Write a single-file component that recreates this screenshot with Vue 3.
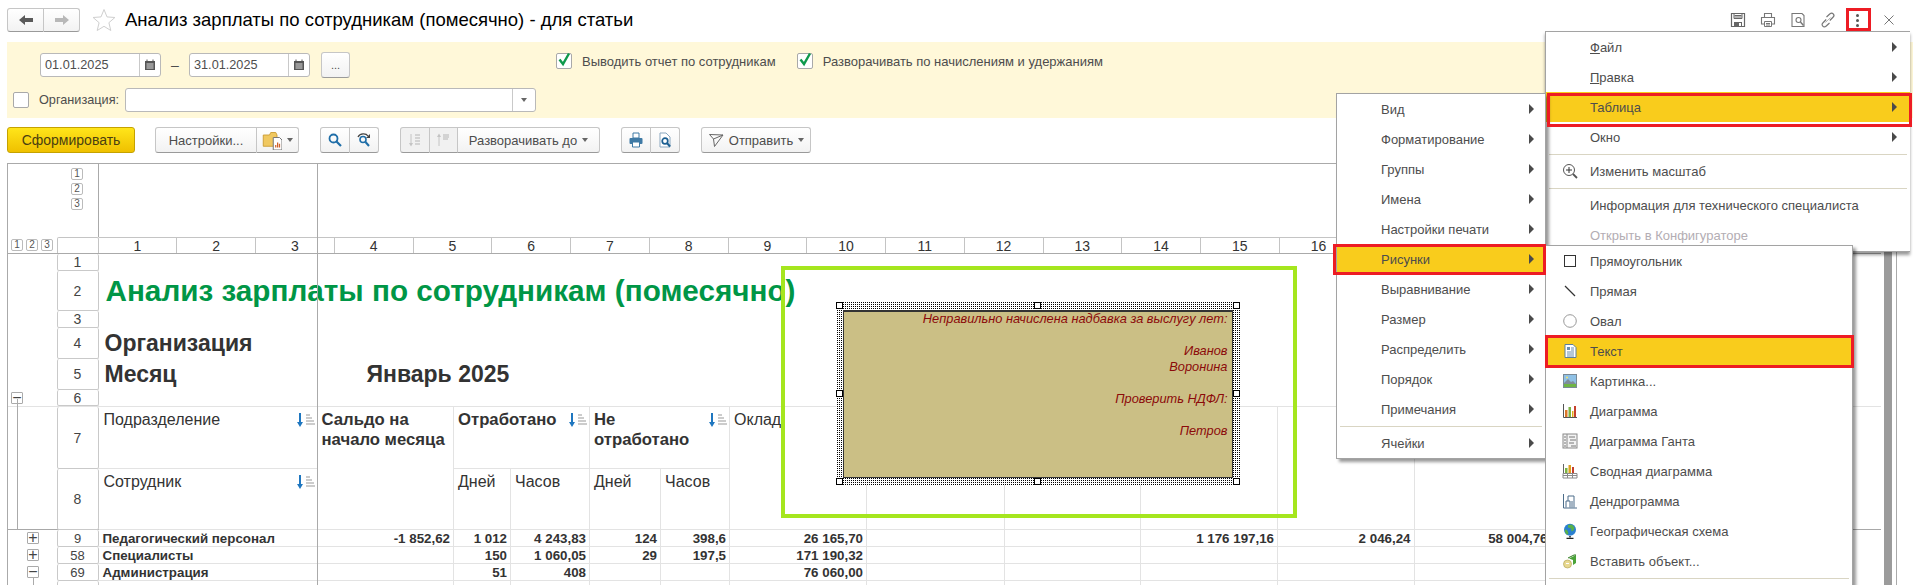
<script setup>
const icons = {
  back: '<path d="M1 8l6-5v3h8v4H7v3z" fill="#5a5a5a"/>',
  forward: '<path d="M15 8L9 3v3H1v4h8v3z" fill="#b8b8b8"/>',
  star: '<path d="M12 1.500l3 7.400 7.900.6-6 5.200 1.900 7.800L12 18.300l-6.800 4.200 1.900-7.800-6-5.200 7.900-.6z" fill="#fff" stroke="#cfcfcf" stroke-width="1"/>',
  calendar: '<rect x="3" y="4" width="10" height="9" fill="#555"/><path d="M5 2.500v2M11 2.500v2" stroke="#555"/><path d="M4.500 7h7M4.500 9h7M4.500 11h7" stroke="#ddd"/>',
  folder: '<path d="M1 4h5l1-2h4l1 2v9H1z" fill="#f0c860" stroke="#c99a30" stroke-width=".7"/><path d="M9 6h5l2 2v8H9z" fill="#fff" stroke="#777" stroke-width=".8"/><path d="M11 14v-2M12.500 14v-4M14 14v-3" stroke="#d0602a"/>',
  search: '<circle cx="6.500" cy="6.500" r="4" fill="none" stroke="#1f6ea8" stroke-width="1.800"/><path d="M9.500 9.500l4.500 4.500" stroke="#1f6ea8" stroke-width="2.200"/>',
  searchAgain: '<circle cx="7" cy="7.500" r="3" fill="none" stroke="#1f6ea8" stroke-width="1.600"/><path d="M9.500 10l3.500 4" stroke="#1f6ea8" stroke-width="2"/><path d="M2 5c2-4 8-4 10-1" fill="none" stroke="#444" stroke-width="1.300"/><path d="M14 2v4h-4z" fill="#444"/>',
  sortOff: '<path d="M4 2v11" stroke="#c4c4c4"/><path d="M2 11l2 3.500 2-3.500z" fill="#c4c4c4"/><path d="M8 3h5M8 6h5M8 9h5M8 12h5" stroke="#b5b5b5"/>',
  sortUpOff: '<path d="M4 3v11" stroke="#c4c4c4"/><path d="M2 5l2-3.500L6 5z" fill="#c4c4c4"/><path d="M8 3h6M8 5h6M8 7h5" stroke="#b5b5b5"/>',
  print: '<path d="M5 1h6v5H5z" fill="#fff" stroke="#3f7aa5"/><rect x="1.500" y="6" width="13" height="6" rx="1" fill="#3f7aa5"/><path d="M4.500 10h7v5h-7z" fill="#fff" stroke="#3f7aa5"/>',
  preview: '<path d="M3 1h6l4 4v10H3z" fill="#fff" stroke="#8aa7bf"/><circle cx="8" cy="9" r="2.800" fill="none" stroke="#1b5f92" stroke-width="1.700"/><path d="M10 11l3 3.500" stroke="#1b5f92" stroke-width="2"/>',
  send: '<path d="M1.500 2.500L15 3 6.500 14.500 5.500 7z" fill="none" stroke="#666"/><path d="M5.500 7L15 3" stroke="#666"/>',
  save: '<path d="M1.500 1.500h13v13h-13z" fill="none" stroke="#666" stroke-width="1.200"/><path d="M4 1.500h8v5H4zM4.500 3.500h7M4.500 5h7" fill="none" stroke="#666"/><rect x="4" y="10" width="8" height="4.500" fill="#666"/><rect x="9" y="11" width="2" height="3" fill="#fff"/>',
  printLine: '<path d="M4.500 5V1.500h7V5M4.500 12h-3V5.500h13V12h-3" fill="none" stroke="#777" stroke-width="1.100"/><path d="M4.500 9.500h7v5h-7zM6 11.500h4M6 13h4" fill="none" stroke="#777"/>',
  previewLine: '<path d="M2 1.500h10l2 2V14.500H2z" fill="none" stroke="#777" stroke-width="1.100"/><circle cx="8.500" cy="8" r="2.500" fill="none" stroke="#777" stroke-width="1.100"/><path d="M10.500 10l3 3.500" stroke="#777" stroke-width="1.400"/>',
  link: '<path d="M6.500 5L10 1.800c1-1 2.300-1 3.200 0s1 2.300 0 3.200L9.800 8.500" fill="none" stroke="#777" stroke-width="1.200"/><path d="M9.500 11L6 14.200c-1 1-2.300 1-3.200 0s-1-2.300 0-3.200l3.400-3.500" fill="none" stroke="#777" stroke-width="1.200"/><path d="M5.500 10.500l5-5" stroke="#bbb"/>',
  close: '<path d="M3.500 3.500l9 9M12.500 3.500l-9 9" stroke="#777" stroke-width="1"/>',
  zoom: '<circle cx="7" cy="7" r="5.500" fill="#fff" stroke="#555"/><path d="M7 4v6M4 7h6" stroke="#333"/><path d="M11 11l4 4" stroke="#555" stroke-width="1.800"/>',
  rect: '<rect x="2.500" y="2.500" width="11" height="11" fill="#fff" stroke="#333"/>',
  line: '<path d="M3 3l10 10" stroke="#333" stroke-width="1.200"/>',
  oval: '<circle cx="8" cy="8" r="6.300" fill="#fff" stroke="#999"/>',
  text: '<path d="M3 1.500h8l3 3v10H3z" fill="#fff" stroke="#5b7f9d"/><path d="M5 4h3v3H5z" fill="#6b8fae"/><path d="M9 5h3M9 7h3M5 9h7M5 11h7M5 13h7" stroke="#6b8fae"/>',
  picture: '<rect x="1.500" y="1.500" width="13" height="13" fill="#8fc1e6" stroke="#7a8a96"/><path d="M2 10l4-4 3 3 2-1 3 3v3H2z" fill="#7e8d99"/><rect x="2" y="11" width="12" height="3" fill="#6fb545"/><circle cx="5" cy="4.500" r="1" fill="#f3e26b"/>',
  chart: '<path d="M1.500 1v13.500H15" fill="none" stroke="#555"/><rect x="3" y="7" width="2.500" height="7" fill="#d9772a"/><rect x="6.500" y="4" width="2.500" height="10" fill="#7db343"/><rect x="10" y="8" width="1.500" height="6" fill="#e0b020"/><rect x="12" y="3" width="2" height="11" fill="#c6402c"/>',
  gantt: '<rect x="1" y="1" width="14" height="14" fill="#f3f3f3" stroke="#8a8a8a"/><path d="M5 1v14" stroke="#8a8a8a"/><path d="M2 4h2M2 7h2M2 10h2M2 13h2M7 4h6M8 7h6M7 10h5M9 13h5" stroke="#777"/>',
  pivot: '<path d="M1 10.500h14v4.500H1zM1 12.500h14M5.500 10.500V15M10.500 10.500V15" fill="#fff" stroke="#8a8a8a"/><rect x="3" y="5" width="2.500" height="5" fill="#7db343"/><rect x="6.500" y="2" width="2.500" height="8" fill="#e0a020"/><rect x="10" y="4" width="2" height="6" fill="#c6402c"/><path d="M1.500 1v9" stroke="#666"/>',
  dendro: '<path d="M1.500 1v14H15" fill="none" stroke="#4c6d8a"/><path d="M4 14.500V8h4v6.500M6 8V3h6v11.500M10 14.500V8" fill="none" stroke="#4c6d8a"/>',
  globe: '<circle cx="8" cy="6.800" r="6" fill="#2a7fd0"/><path d="M6 2l4-.5 2.500 3-1 3-2 1-.5-3-3-1zM3 6l2.500 1.500 1 3-1.500 1.500L3 9z" fill="#58b04a"/><path d="M8 13v1.500" stroke="#222" stroke-width="1.500"/><path d="M4.500 15.500h7" stroke="#222" stroke-width="1.500"/>',
  insert: '<ellipse cx="5.500" cy="11" rx="4" ry="4" fill="#e8d890" stroke="#b5a75a" stroke-width=".7"/><path d="M4 10.500h3" stroke="#fff"/><path d="M7 5.500l7-3.500v8l-3 2V7z" fill="#4aa338"/><path d="M6 5l6-3 2 0" stroke="#2c7a1e" fill="none"/>',
  sortBlue: '<path d="M4 1v11" stroke="#1f77c0" stroke-width="2"/><path d="M1 10l3 5 3-5z" fill="#1f77c0"/><path d="M10 3h4M10 6h6M10 9h8M10 12h9" stroke="#999"/>'
}

const mainMenu = [
  { first: 'Ф', rest: 'айл', arrow: true },
  { first: 'П', rest: 'равка', arrow: true },
  { rest: 'Таблица', arrow: true, active: true },
  { rest: 'Окно', arrow: true },
  { sep: true },
  { rest: 'Изменить масштаб', icon: 'zoom' },
  { sep: true },
  { rest: 'Информация для технического специалиста' },
  { rest: 'Открыть в Конфигураторе', disabled: true }
]

const leftMenu = [
  { rest: 'Вид', arrow: true },
  { rest: 'Форматирование', arrow: true },
  { rest: 'Группы', arrow: true },
  { rest: 'Имена', arrow: true },
  { rest: 'Настройки печати', arrow: true },
  { rest: 'Рисунки', arrow: true, active: true },
  { rest: 'Выравнивание', arrow: true },
  { rest: 'Размер', arrow: true },
  { rest: 'Распределить', arrow: true },
  { rest: 'Порядок', arrow: true },
  { rest: 'Примечания', arrow: true },
  { sep: true },
  { rest: 'Ячейки', arrow: true }
]

const drawMenu = [
  { rest: 'Прямоугольник', icon: 'rect' },
  { rest: 'Прямая', icon: 'line' },
  { rest: 'Овал', icon: 'oval' },
  { rest: 'Текст', icon: 'text', active: true },
  { rest: 'Картинка...', icon: 'picture' },
  { rest: 'Диаграмма', icon: 'chart' },
  { rest: 'Диаграмма Ганта', icon: 'gantt' },
  { rest: 'Сводная диаграмма', icon: 'pivot' },
  { rest: 'Дендрограмма', icon: 'dendro' },
  { rest: 'Географическая схема', icon: 'globe' },
  { rest: 'Вставить объект...', icon: 'insert' },
  { sep: true }
]

const colNumbers = Array.from({ length: 16 }, (_, i) => i + 1)

const dataRows = [
  { n: 9, sign: '+', cells: ['Педагогический персонал', '-1 852,62', '1 012', '4 243,83', '124', '398,6', '26 165,70', '', '', '1 176 197,16', '2 046,24', '58 004,76', '', ''] },
  { n: 58, sign: '+', cells: ['Специалисты', '', '150', '1 060,05', '29', '197,5', '171 190,32', '', '', '', '', '', '', ''] },
  { n: 69, sign: '−', cells: ['Администрация', '', '51', '408', '', '', '76 060,00', '', '', '', '', '', '', ''] },
  { n: '', sign: '', tree: true, cells: ['', '', '', '', '', '', '', '', '', '', '', '', '', ''] }
]

const plainHeads = ['Оклад', '', '', 'Отпуск', '', '', '', 'Возмещение']

const handles = ['tl', 'tc', 'tr', 'ml', 'mr', 'bl', 'bc', 'br']
</script>

<template>
  <div class="page">
    <header class="topbar">
      <div class="btn-group nav">
        <button class="btn"><svg class="i16" viewBox="0 0 16 16" v-html="icons.back"></svg></button>
        <button class="btn"><svg class="i16" viewBox="0 0 16 16" v-html="icons.forward"></svg></button>
      </div>
      <svg class="star" viewBox="0 0 24 24" v-html="icons.star"></svg>
      <h1 class="title">Анализ зарплаты по сотрудникам (помесячно) - для статьи</h1>
      <div class="window-tools">
        <svg class="i16" viewBox="0 0 16 16" v-html="icons.save"></svg>
        <svg class="i16" viewBox="0 0 16 16" v-html="icons.printLine"></svg>
        <svg class="i16" viewBox="0 0 16 16" v-html="icons.previewLine"></svg>
        <svg class="i16" viewBox="0 0 16 16" v-html="icons.link"></svg>
        <div class="dots"><i></i><i></i><i></i></div>
        <svg class="i16 close" viewBox="0 0 16 16" v-html="icons.close"></svg>
      </div>
    </header>

    <section class="filters">
      <div class="filter-row first">
        <div class="field date">
          <span class="value">01.01.2025</span>
          <span class="suffix"><svg class="i16" viewBox="0 0 16 16" v-html="icons.calendar"></svg></span>
        </div>
        <span class="dash">–</span>
        <div class="field date">
          <span class="value">31.01.2025</span>
          <span class="suffix"><svg class="i16" viewBox="0 0 16 16" v-html="icons.calendar"></svg></span>
        </div>
        <button class="btn more">...</button>
        <label class="check first-check">
          <span class="box"><svg viewBox="0 0 16 16"><path d="M3.500 7.500l3.500 4.500 6-10.500" fill="none" stroke="#0f9a4c" stroke-width="2.400"/></svg></span>
          Выводить отчет по сотрудникам
        </label>
        <label class="check second-check">
          <span class="box"><svg viewBox="0 0 16 16"><path d="M3.500 7.500l3.500 4.500 6-10.500" fill="none" stroke="#0f9a4c" stroke-width="2.400"/></svg></span>
          Разворачивать по начислениям и удержаниям
        </label>
      </div>
      <div class="filter-row second">
        <span class="box"></span>
        <span class="org-label">Организация:</span>
        <div class="field org">
          <span class="value"></span>
          <span class="suffix"><i class="tri"></i></span>
        </div>
      </div>
    </section>

    <nav class="toolbar">
      <button class="btn primary">Сформировать</button>
      <div class="btn-group settings">
        <button class="btn wide">Настройки...</button>
        <button class="btn"><svg class="i18" viewBox="0 0 16 16" v-html="icons.folder"></svg><i class="tri"></i></button>
      </div>
      <div class="btn-group pair">
        <button class="btn"><svg class="i16" viewBox="0 0 16 16" v-html="icons.search"></svg></button>
        <button class="btn"><svg class="i16" viewBox="0 0 16 16" v-html="icons.searchAgain"></svg></button>
      </div>
      <div class="btn-group expand">
        <button class="btn off"><svg class="i16" viewBox="0 0 16 16" v-html="icons.sortOff"></svg></button>
        <button class="btn off"><svg class="i16" viewBox="0 0 16 16" v-html="icons.sortUpOff"></svg></button>
        <button class="btn wide">Разворачивать до <i class="tri"></i></button>
      </div>
      <div class="btn-group pair">
        <button class="btn"><svg class="i16" viewBox="0 0 16 16" v-html="icons.print"></svg></button>
        <button class="btn"><svg class="i16" viewBox="0 0 16 16" v-html="icons.preview"></svg></button>
      </div>
      <button class="btn send"><svg class="i16" viewBox="0 0 16 16" v-html="icons.send"></svg> Отправить <i class="tri"></i></button>
    </nav>

    <div class="sheet-wrap">
      <section class="sheet">
        <div class="freeze"></div>

        <div class="sheet-top">
          <div class="corner">
            <span class="lv">1</span><span class="lv">2</span><span class="lv">3</span>
          </div>
        </div>

        <div class="col-head">
          <div class="levels">
            <span class="lv">1</span><span class="lv">2</span><span class="lv">3</span>
          </div>
          <div class="col-corner"></div>
          <span v-for="c in colNumbers" :key="c" class="col-num">{{ c }}</span>
        </div>

        <div class="row h17"><span class="gutter"></span><span class="num">1</span></div>
        <div class="row h40"><span class="gutter"></span><span class="num">2</span>
          <span class="report-title">Анализ зарплаты по сотрудникам (помесячно)</span>
        </div>
        <div class="row h17"><span class="gutter"></span><span class="num">3</span></div>
        <div class="row h31"><span class="gutter"></span><span class="num">4</span>
          <span class="report-label">Организация</span>
        </div>
        <div class="row h31"><span class="gutter"></span><span class="num">5</span>
          <span class="report-label month">Месяц</span>
          <span class="report-label">Январь 2025</span>
        </div>
        <div class="row h17 line-bottom"><span class="gutter"><span class="toggle group-toggle">−</span></span><span class="num">6</span></div>

        <div class="table-head">
          <span class="gutter span2"><i class="tree"></i></span>
          <span class="num r7">7</span>
          <span class="num r8">8</span>

          <div class="th a1"><span>Подразделение</span><svg class="sort" viewBox="0 0 20 16" v-html="icons.sortBlue"></svg></div>
          <div class="th a2"><span>Сотрудник</span><svg class="sort" viewBox="0 0 20 16" v-html="icons.sortBlue"></svg></div>
          <div class="th saldo"><b>Сальдо на<br>начало месяца</b></div>
          <div class="th c"><b>Отработано</b><svg class="sort" viewBox="0 0 20 16" v-html="icons.sortBlue"></svg></div>
          <div class="th c2">Дней</div>
          <div class="th c3">Часов</div>
          <div class="th d"><b>Не<br>отработано</b><svg class="sort" viewBox="0 0 20 16" v-html="icons.sortBlue"></svg></div>
          <div class="th d2">Дней</div>
          <div class="th d3">Часов</div>
          <div v-for="(h, i) in plainHeads" :key="i" class="th plain">{{ h }}</div>
        </div>

        <div v-for="(r, ri) in dataRows" :key="ri" class="data-row">
          <span class="gutter">
            <span v-if="r.sign" class="toggle row-toggle">{{ r.sign }}</span>
            <i v-if="r.tree" class="row-tree"></i>
          </span>
          <span class="num">{{ r.n }}</span>
          <span v-for="(c, i) in r.cells" :key="i" class="td" :class="{ name: i === 0 }">{{ c }}</span>
        </div>
      </section>
      <div class="vscroll"></div>
      <div class="vline"></div>
    </div>

    <!-- рисунок на листе -->
    <div class="drawing">
      <div class="note">
        Неправильно начислена надбавка за выслугу лет:<br><br>
        Иванов<br>Воронина<br><br>
        Проверить НДФЛ:<br><br>
        Петров
      </div>
      <span v-for="h in handles" :key="h" class="handle" :class="h"></span>
    </div>
    <div class="green-frame"></div>

    <!-- меню -->
    <div class="menu menu-main">
      <template v-for="(m, i) in mainMenu" :key="i">
        <div v-if="m.sep" class="sep"></div>
        <div v-else class="item" :class="{ active: m.active, disabled: m.disabled }">
          <svg v-if="m.icon" class="item-icon" viewBox="0 0 16 16" v-html="icons[m.icon]"></svg>
          <span class="label"><u v-if="m.first">{{ m.first }}</u>{{ m.rest }}</span>
          <i v-if="m.arrow" class="arrow"></i>
        </div>
      </template>
    </div>
    <div class="menu menu-left">
      <template v-for="(m, i) in leftMenu" :key="i">
        <div v-if="m.sep" class="sep"></div>
        <div v-else class="item" :class="{ active: m.active }">
          <span class="label">{{ m.rest }}</span>
          <i class="arrow"></i>
        </div>
      </template>
    </div>
    <div class="menu menu-draw">
      <template v-for="(m, i) in drawMenu" :key="i">
        <div v-if="m.sep" class="sep"></div>
        <div v-else class="item" :class="{ active: m.active }">
          <svg class="item-icon" viewBox="0 0 16 16" v-html="icons[m.icon]"></svg>
          <span class="label">{{ m.rest }}</span>
        </div>
      </template>
    </div>

    <!-- красные рамки -->
    <div class="mark mark-dots"></div>
    <div class="mark mark-table"></div>
    <div class="mark mark-pics"></div>
    <div class="mark mark-text"></div>
  </div>
</template>

<style>
html, body { margin: 0; height: 585px; overflow: hidden; background: #fff; }
</style>

<style scoped>
.page {
  position: relative;
  width: 1913px;
  height: 585px;
  overflow: hidden;
  font-family: "Liberation Sans", Arial, sans-serif;
  font-size: 13px;
  color: #4d4d4d;
}
button { font: inherit; color: inherit; padding: 0; }
i { font-style: normal; }

.i16 { width: 16px; height: 16px; flex: none; }
.i18 { width: 20px; height: 20px; flex: none; }

/* top bar */
.topbar { height: 42px; box-sizing: border-box; padding: 0 16px 2px 7px; display: flex; align-items: center; }
.nav { width: 73px; height: 24px; }
.star { width: 24px; height: 24px; margin-left: 12px; }
.title { margin: 0 0 0 9px; font-size: 18.5px; font-weight: 400; color: #000; white-space: nowrap; }
.window-tools { margin-left: auto; display: flex; align-items: center; gap: 14px; }
.dots { width: 25px; height: 23px; display: flex; flex-direction: column; align-items: center; justify-content: center; gap: 2px; margin: 0 -4px 0 -5px; }
.dots i { width: 3px; height: 3px; border-radius: 50%; background: #555; }
.close { margin-left: 1px; }

/* buttons */
.btn {
  height: 100%;
  box-sizing: border-box;
  display: flex;
  align-items: center;
  justify-content: center;
  gap: 5px;
  background: linear-gradient(#fff, #f2f2f2);
  border: 1px solid #c6c6c6;
  border-bottom-color: #9a9a9a;
  border-radius: 3px;
  white-space: nowrap;
}
.btn-group { display: flex; }
.btn-group .btn { flex: 1; border-radius: 0; border-left: none; }
.btn-group .btn:first-child { border-left: 1px solid #c6c6c6; border-radius: 3px 0 0 3px; }
.btn-group .btn:last-child { border-radius: 0 3px 3px 0; }
.btn.off { background: #f1f1f1; }
.tri { display: inline-block; width: 0; height: 0; border: 3px solid transparent; border-top: 4px solid #666; border-bottom: 0; }

/* filters */
.filters { margin-left: 7px; height: 76px; box-sizing: border-box; padding-top: 10px; background: #fff8d9; }
.filter-row { display: flex; align-items: center; }
.filter-row.first { height: 26px; padding-left: 33px; }
.filter-row.second { height: 24px; margin-top: 10px; padding-left: 6px; }
.field { height: 24px; box-sizing: border-box; display: flex; background: #fff; border: 1px solid #b9b9b9; border-radius: 3px; }
.value { flex: 1; padding-left: 4px; line-height: 22px; font-size: 12.7px; color: #4d4d4d; }
.suffix { width: 20px; border-left: 1px solid #c9c9c9; display: flex; align-items: center; justify-content: center; }
.date { width: 121px; }
.dash { width: 28px; text-align: center; font-size: 14px; }
.more { width: 29px; height: 26px; margin-left: 11px; padding-bottom: 0; font-size: 11px; }
.box { width: 16px; height: 16px; box-sizing: border-box; flex: none; display: block; background: #fff; border: 1px solid #a9a9a9; border-radius: 2px; }
.box svg { display: block; width: 16px; height: 16px; margin: -2px 0 0 -1px; overflow: visible; }
.check { display: flex; align-items: center; gap: 10px; margin-top: -8px; white-space: nowrap; }
.first-check { margin-left: 206px; }
.second-check { margin-left: 21px; }
.org-label { margin: -1px 0 0 10px; width: 86px; font-size: 12.7px; }
.org { width: 411px; }
.org .suffix { width: 22px; }

/* toolbar */
.toolbar { height: 26px; margin: 9px 0 10px 7px; display: flex; gap: 21px; }
.primary { width: 128px; background: linear-gradient(#ffe51a, #efc000); border-color: #c5a200; color: #4a3f10; font-size: 14px; }
.settings { width: 144px; margin-left: -1px; }
.settings .wide { flex: none; width: 102px; }
.pair { width: 59px; }
.expand { width: 200px; }
.expand .wide { flex: none; width: 142px; }
.send { width: 110px; }

/* spreadsheet */
.sheet-wrap { display: flex; height: 422px; margin-left: 7px; }
.sheet { position: relative; width: 1874px; height: 422px; overflow: hidden; box-sizing: border-box; border-top: 1px solid #aaa; border-left: 1px solid #aaa; color: #333; }
.vscroll { width: 8px; margin-left: 3px; background: #9b9b9b; }
.vline { width: 1px; margin-left: 4px; background: #aaa; }
.freeze { position: absolute; left: 309px; top: 0; bottom: 0; width: 1px; background: #aaa; z-index: 1; }

.sheet-top { height: 73px; display: flex; }
.corner { width: 91px; box-sizing: border-box; padding: 4px 15px 0 0; border-right: 1px solid #aaa; display: flex; flex-direction: column; align-items: flex-end; gap: 3px; }
.lv { width: 12px; height: 12px; box-sizing: border-box; border: 1px solid #bbb; border-radius: 2px; font-size: 10px; line-height: 10px; text-align: center; color: #555; flex: none; }

.col-head { height: 17px; box-sizing: border-box; display: flex; border-bottom: 1px solid #aaa; }
.levels { width: 48.5px; box-sizing: border-box; padding-left: 3px; display: flex; gap: 3px; align-items: center; }
.col-corner { width: 42px; box-sizing: border-box; border: 1px solid #c4c4c4; border-bottom: none; border-radius: 2px 2px 0 0; }
.col-num { width: 78.75px; flex: none; box-sizing: border-box; border-top: 1px solid #c4c4c4; border-right: 1px solid #c4c4c4; font-size: 14px; line-height: 16px; text-align: center; }

.row { display: flex; }
.h17 { height: 17px; }
.h40 { height: 40px; }
.h31 { height: 31px; }
.line-bottom { box-sizing: border-box; border-bottom: 1px solid #e3e3e3; }
.gutter { width: 48.5px; flex: none; position: relative; }
.num { width: 42px; flex: none; box-sizing: border-box; display: flex; align-items: center; justify-content: center; border: 1px solid #c9c9c9; border-top: none; border-radius: 2px; font-size: 14px; font-weight: 400; color: #444; background: #fff; }

.report-title { margin-left: 7px; font-size: 29.7px; font-weight: 700; line-height: 40px; color: #009646; white-space: nowrap; }
.report-label { font-size: 23px; font-weight: 700; line-height: 31px; margin-left: 6px; color: #333; white-space: nowrap; }
.month { width: 256px; }

.toggle { position: absolute; width: 12px; height: 12px; box-sizing: border-box; border: 1px solid #aaa; border-radius: 1px; background: #fff; font-size: 16px; font-weight: 400; line-height: 9px; text-align: center; color: #444; }
.group-toggle { left: 3px; top: 2px; }
.row-toggle { left: 19px; top: 2px; }
.row-tree { position: absolute; left: 25px; top: -3px; bottom: 0; border-left: 1px solid #aaa; }

.table-head,
.data-row {
  display: grid;
  grid-template-columns: 48.5px 42px 219px 136.5px 57px 79px 71px 69px 137px 138px 136px 137px 136.500px 137px 137px 137px 60px;
}
.table-head { grid-template-rows: 62px 61px; height: 123px; box-sizing: border-box; border-bottom: 1px solid #a8a8a8; }
.span2 { grid-row: 1 / 3; grid-column: 1; }
.tree { position: absolute; left: 9px; top: -8px; bottom: 0; border-left: 1px solid #aaa; }
.r7 { grid-row: 1; grid-column: 2; }
.r8 { grid-row: 2; grid-column: 2; }
.th { box-sizing: border-box; display: flex; align-items: flex-start; padding: 3px 1px 0 4px; font-size: 16px; line-height: 20px; border-right: 1px solid #e3e3e3; border-bottom: 1px solid #e3e3e3; white-space: nowrap; overflow: hidden; }
.th b { display: block; font-size: 16.7px; }
.sort { width: 20px; height: 16px; margin: 2px 0 0 auto; flex: none; }
.a1 { grid-column: 3; grid-row: 1; }
.a2 { grid-column: 3; grid-row: 2; }
.saldo { grid-column: 4; grid-row: 1 / 3; }
.c { grid-column: 5 / 7; grid-row: 1; }
.c2 { grid-column: 5; grid-row: 2; }
.c3 { grid-column: 6; grid-row: 2; }
.d { grid-column: 7 / 9; grid-row: 1; }
.d2 { grid-column: 7; grid-row: 2; }
.d3 { grid-column: 8; grid-row: 2; }
.plain { grid-row: 1 / 3; }
.th.a1, .th.a2 { padding-left: 5px; }

.data-row { height: 17px; font-size: 13.33px; font-weight: 700; }
.data-row .num { font-size: 13px; }
.td { box-sizing: border-box; padding-right: 3px; line-height: 18px; text-align: right; white-space: nowrap; overflow: hidden; border-right: 1px solid #e3e3e3; border-bottom: 1px solid #e3e3e3; }
.td.name { text-align: left; padding-left: 4px; }

/* drawing */
.drawing {
  position: absolute;
  left: 835.5px;
  top: 302px;
  width: 404px;
  height: 183px;
  box-sizing: border-box;
  padding: 8px 7px 7px 7.5px;
  background-image: conic-gradient(#000 25%, #fff 0);
  background-size: 2px 2px;
}
.note { height: 100%; box-sizing: border-box; padding-right: 4px; background: #cbbf85; border: 1px solid #333; box-shadow: inset 0 1px 0 #333; font-size: 12.8px; font-style: italic; line-height: 16px; text-align: right; color: #8b0a0a; }
.handle { position: absolute; width: 7px; height: 7px; box-sizing: border-box; background: #fff; border: 1px solid #000; }
.tl, .tc, .tr { top: 0; }
.ml, .mr { top: 88px; }
.bl, .bc, .br { bottom: 0; }
.tl, .ml, .bl { left: 0; }
.tc, .bc { left: 198.5px; }
.tr, .mr, .br { right: 0; }
.green-frame { position: absolute; left: 781px; top: 266px; width: 516px; height: 252px; box-sizing: border-box; border: 4px solid #a5e61e; }

/* menus */
.menu { position: absolute; box-sizing: border-box; background: #fff; border: 1px solid #a3a3a3; box-shadow: 3px 3px 3px rgba(0, 0, 0, .4); font-size: 13px; color: #4d4d4d; }
.item { position: relative; height: 30px; display: flex; align-items: center; white-space: nowrap; }
.item.active { background: #f9cc1c; }
.item.disabled { color: #b3adb3; }
.label { position: absolute; }
.arrow { position: absolute; width: 0; height: 0; border: 5px solid transparent; border-left: 5px solid #4a4a4a; border-right: 0; }
.sep { height: 1px; margin: 1px 3px 2px; background: #d9d5c3; }
.item-icon { position: absolute; width: 16px; height: 16px; left: 16px; top: 7px; }

.menu-main { left: 1545px; top: 31px; width: 365px; height: 221px; border-right: none; box-shadow: 0 3px 3px rgba(0, 0, 0, .4); z-index: 3; }
.menu-main .label { left: 44px; }
.menu-main .arrow { left: 346px; }
.menu-main .item-icon { left: 16px; }
.menu-main .sep { margin: 2px 3px 1px; }

.menu-left { left: 1336px; top: 93px; width: 210px; height: 366px; z-index: 4; }
.menu-left .label { left: 44px; }
.menu-left .arrow { left: 192px; }
.menu-left .sep { margin: 2px 3px 1px; }

.menu-draw { left: 1545px; top: 245px; width: 308px; height: 345px; z-index: 5; }
.menu-draw .label { left: 44px; }
.menu-draw .sep { margin: 2px 3px 0; }

.mark { position: absolute; box-sizing: border-box; border: 3px solid #ed1c24; z-index: 6; }
.mark-dots { left: 1846px; top: 8px; width: 25px; height: 23px; }
.mark-table { left: 1547px; top: 93px; width: 365px; height: 34px; }
.mark-pics { left: 1333px; top: 244px; width: 213px; height: 31px; }
.mark-text { left: 1545px; top: 335px; width: 309px; height: 33px; }
</style>
